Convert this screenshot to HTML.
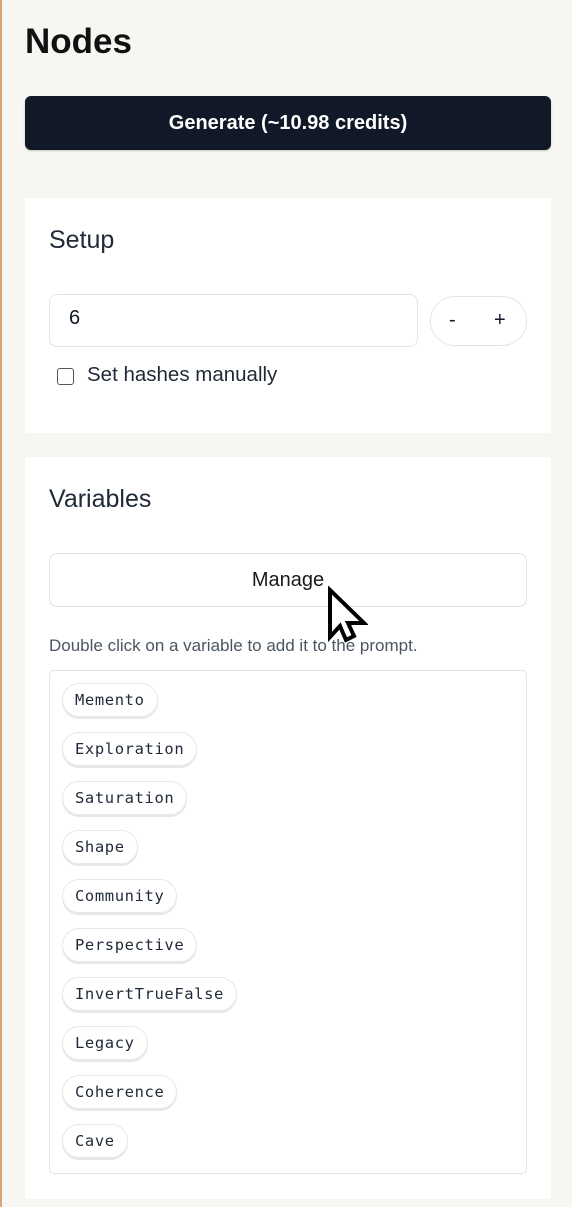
<!DOCTYPE html>
<html><head><style>
body{margin:0;width:572px;height:1207px;background:#f7f6f2;font-family:"Liberation Sans",sans-serif;position:relative;overflow:hidden;color:#111827}
.edge{position:absolute;left:0;top:0;width:2px;height:1207px;background:#d9a47a}
h1{position:absolute;left:25px;top:22px;margin:0;font-size:35px;font-weight:bold;color:#111}
.gen{position:absolute;left:25px;top:96px;width:526px;height:54px;background:#111827;border-radius:6px;color:#fff;font-size:20px;font-weight:bold;text-align:center;line-height:54px;box-shadow:0 1px 2px rgba(0,0,0,.2)}
.card{position:absolute;left:25px;width:526px;background:#fff}
h2{position:absolute;left:24px;margin:0;font-size:25px;font-weight:500;color:#1f2937}
.inp{position:absolute;left:24px;top:96px;width:369px;height:53px;border:1px solid #e2e4ea;border-radius:8px;box-sizing:border-box;font-size:20px;padding:12px 19px}
.pm{position:absolute;left:405px;top:98px;width:97px;height:50px;border:1px solid #e2e4ea;border-radius:25px;box-sizing:border-box;font-size:20px}
.cb{position:absolute;left:32px;top:170px;width:15px;height:15px;border:1.5px solid #555;border-radius:3px}
.lab{position:absolute;left:62px;top:165px;font-size:20.5px;color:#1f2937;font-weight:500}
.mg{position:absolute;left:24px;top:96px;width:478px;height:54px;border:1px solid #e2e4ea;border-radius:8px;box-sizing:border-box;text-align:center;line-height:52px;font-size:20px;color:#1a1a1a}
.hint{position:absolute;left:24px;top:179px;font-size:17px;color:#4b5563}
.list{position:absolute;left:24px;top:213px;width:478px;height:504px;border:1px solid #e2e4ea;border-radius:5px;box-sizing:border-box}
.pill{position:absolute;left:12px;height:34px;border:1px solid #e5e7eb;border-radius:17px;box-shadow:0 2px 0 #e5e7eb;box-sizing:border-box;padding:0 12px;font-family:"DejaVu Sans Mono","Liberation Mono",monospace;font-size:15.5px;letter-spacing:0.6px;line-height:32px;color:#1f2937}
</style></head><body>
<div class="edge"></div>
<h1>Nodes</h1>
<div class="gen">Generate (~10.98 credits)</div>
<div class="card" style="top:198px;height:235px">
<h2 style="top:28px">Setup</h2>
<div class="inp">6</div>
<div class="pm"><span style="position:absolute;left:18px;top:12px">-</span><span style="position:absolute;left:63px;top:12px">+</span></div>
<div class="cb"></div><div class="lab">Set hashes manually</div>
</div>
<div class="card" style="top:457px;height:742px">
<h2 style="top:28px">Variables</h2>
<div class="mg">Manage</div>
<div class="hint">Double click on a variable to add it to the prompt.</div>
<div class="list">
<div class="pill" style="top:12px">Memento</div>
<div class="pill" style="top:61px">Exploration</div>
<div class="pill" style="top:110px">Saturation</div>
<div class="pill" style="top:159px">Shape</div>
<div class="pill" style="top:208px">Community</div>
<div class="pill" style="top:257px">Perspective</div>
<div class="pill" style="top:306px">InvertTrueFalse</div>
<div class="pill" style="top:355px">Legacy</div>
<div class="pill" style="top:404px">Coherence</div>
<div class="pill" style="top:453px">Cave</div>
</div>
</div>
<svg style="position:absolute;left:326px;top:586px" width="42" height="60" viewBox="0 0 42 60"><path d="M4 4 L4 51 L14 40 L20 54 L28 50 L22 37 L38 37 Z" fill="#fff" stroke="#000" stroke-width="4" stroke-linejoin="miter"/></svg>
</body></html>
